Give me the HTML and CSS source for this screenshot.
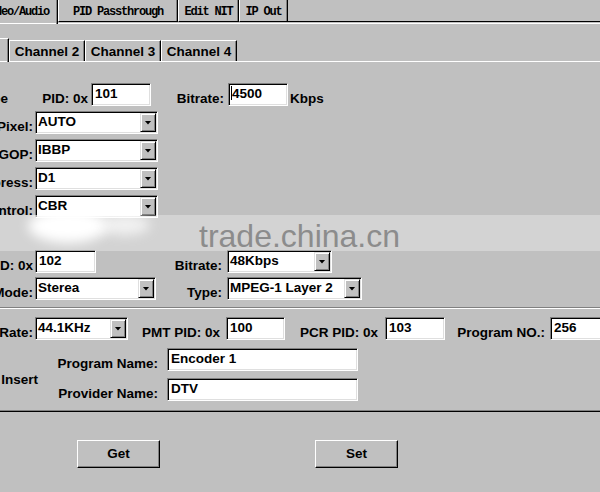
FILE: index.html
```html
<!DOCTYPE html>
<html lang="en">
<head>
    <meta charset="UTF-8">
    <meta name="viewport" content="width=device-width, initial-scale=1.0">
    <title>Encoder Setup</title>
    <link rel="stylesheet" href="styles.css">
</head>
<body>
    <div class="window">
        <!-- page tabs -->
        <div class="tabs">
            <div class="tab active tab-video">Video/Audio</div>
            <div class="tab tab-pid">PID Passthrough</div>
            <div class="tab tab-nit">Edit NIT</div>
            <div class="tab tab-ip">IP Out</div>
            <div class="tab-rest"></div>
        </div>

        <!-- channel tabs -->
        <div class="channels">
            <div class="chan active">Channel 1</div>
            <div class="chan">Channel 2</div>
            <div class="chan">Channel 3</div>
            <div class="chan">Channel 4</div>
        </div>

        <!-- video settings -->
        <div class="group video">
            <div class="row">
                <div class="lbl cap-video">Video Type</div>
                <div class="lbl lbl-pid">PID: 0x</div>
                <div class="field f-pid">101</div>
                <div class="lbl lbl-rate">Bitrate:</div>
                <div class="field f-rate"><span class="caret"></span>4500</div>
                <div class="lbl unit">Kbps</div>
            </div>
            <div class="row">
                <div class="lbl lead">Pixel:</div>
                <div class="field combo c-video"><span>AUTO</span><span class="drop"></span></div>
            </div>
            <div class="row">
                <div class="lbl lead">GOP:</div>
                <div class="field combo c-video"><span>IBBP</span><span class="drop"></span></div>
            </div>
            <div class="row">
                <div class="lbl lead">Compress:</div>
                <div class="field combo c-video"><span>D1</span><span class="drop"></span></div>
            </div>
            <div class="row">
                <div class="lbl lead">Rate Control:</div>
                <div class="field combo c-video"><span>CBR</span><span class="drop"></span></div>
            </div>
        </div>

        <!-- audio settings -->
        <div class="group audio">
            <div class="row">
                <div class="lbl lead">Audio PID: 0x</div>
                <div class="field f-apid">102</div>
                <div class="lbl lbl-abitrate">Bitrate:</div>
                <div class="field combo c-abitrate"><span>48Kbps</span><span class="drop"></span></div>
            </div>
            <div class="row">
                <div class="lbl lead">Audio Mode:</div>
                <div class="field combo c-mode"><span>Sterea</span><span class="drop"></span></div>
                <div class="lbl lbl-type">Type:</div>
                <div class="field combo c-type"><span>MPEG-1 Layer 2</span><span class="drop"></span></div>
            </div>
        </div>

        <div class="sep"></div>

        <!-- program / PSI -->
        <div class="group psi">
            <div class="row">
                <div class="lbl lead">Sample Rate:</div>
                <div class="field combo c-sample"><span>44.1KHz</span><span class="drop"></span></div>
                <div class="lbl lbl-pmt">PMT PID: 0x</div>
                <div class="field f-pmt">100</div>
                <div class="lbl lbl-pcr">PCR PID: 0x</div>
                <div class="field f-pcr">103</div>
                <div class="lbl lbl-prog">Program NO.:</div>
                <div class="field f-prog">256</div>
            </div>
            <div class="names">
                <div class="lbl cap-insert">PSI Insert</div>
                <div class="name-rows">
                    <div class="row">
                        <div class="lbl lbl-name">Program Name:</div>
                        <div class="field f-name">Encoder 1</div>
                    </div>
                    <div class="row">
                        <div class="lbl lbl-name">Provider Name:</div>
                        <div class="field f-name">DTV</div>
                    </div>
                </div>
            </div>
        </div>

        <div class="sep dark"></div>

        <div class="actions">
            <div class="button">Get</div>
            <div class="button">Set</div>
        </div>
    </div>

    <div class="watermark">
        <span class="blob blob-a"></span>
        <span class="blob blob-b"></span>
        <span class="mark">trade.china.cn</span>
    </div>
</body>
</html>
```

FILE: styles.css
```css
html,
body {
    margin: 0;
    padding: 0;
    width: 600px;
    height: 492px;
    overflow: hidden;
}

body {
    position: relative;
    background-color: #c0c0c0;
    color: #000000;
    font-family: "Liberation Sans", Arial, sans-serif;
    font-size: 13.5px;
    font-weight: bold;
}

.window {
    margin-left: -60px;
    width: 720px;
}

/* page tabs */
.tabs {
    display: flex;
    align-items: flex-end;
    margin-top: -3px;
    padding-left: 34px;
    padding-bottom: 1px;
    border-bottom: 1px solid #ffffff;
}

.tab {
    box-sizing: border-box;
    font-family: "Liberation Mono", "Courier New", monospace;
    font-size: 12px;
    font-weight: bold;
    letter-spacing: -1.2px;
    line-height: 16px;
    text-align: center;
    padding: 6px 0 1px;
    border-top: 1px solid #ffffff;
    border-left: 1px solid #ffffff;
    border-right: 1px solid #000000;
    border-bottom: 1px solid #000000;
    box-shadow: inset -1px 0 #808080;
}

.tab.active {
    border-bottom: none;
    padding-bottom: 4px;
    margin-bottom: -2px;
}

.tab-video { width: 84px; }
.tab-pid { width: 120px; }
.tab-nit { width: 61px; }
.tab-ip { width: 49px; }

.tab-rest {
    flex: 1;
    border-bottom: 1px solid #000000;
}

/* channel tabs */
.channels {
    display: flex;
    align-items: flex-end;
    margin: 14px 0 0 -15px;
    border-bottom: 1px solid #ffffff;
}

.chan {
    box-sizing: border-box;
    width: 76px;
    line-height: 16px;
    text-align: center;
    padding: 3px 0 1px;
    border-top: 1px solid #ffffff;
    border-left: 1px solid #ffffff;
    border-right: 1px solid #000000;
    box-shadow: inset -1px 0 #808080;
}

.chan.active {
    width: 84px;
    padding: 4px 0 3px;
    margin-bottom: -1px;
}

/* rows */
.group {
    display: flex;
    flex-direction: column;
}

.video {
    margin-top: 21px;
    gap: 5px;
}

.audio {
    margin-top: 32px;
    gap: 4px;
}

.psi {
    margin-top: 8px;
    gap: 8px;
}

.row {
    display: flex;
    align-items: flex-start;
    height: 23px;
}

/* right-aligned label; long text spills out to the left */
.lbl {
    flex: none;
    box-sizing: border-box;
    display: flex;
    justify-content: flex-end;
    white-space: nowrap;
    line-height: 16px;
    padding-top: 8px;
}

.lead { width: 93px; margin-right: 2px; }
.cap-video { width: 68px; }
.lbl-pid { width: 80px; margin-right: 3px; }
.lbl-rate { width: 73px; margin-right: 4px; }
.unit { margin-left: 2px; }
.lbl-abitrate { width: 126px; margin-right: 5px; }
.lbl-type { width: 66px; margin-right: 5px; }
.lbl-pmt { width: 92px; margin-right: 6px; }
.lbl-pcr { width: 93px; margin-right: 7px; }
.lbl-prog { width: 100px; margin-right: 5px; }
.lbl-name { width: 120px; margin-right: 9px; }

/* sunken edit box */
.field {
    flex: none;
    box-sizing: border-box;
    height: 23px;
    background-color: #ffffff;
    border: 1px solid;
    border-color: #808080 #ffffff #ffffff #808080;
    box-shadow: inset 1px 1px #000000, inset -1px -1px #dfdfdf;
    padding: 2px 2px 0 3px;
    line-height: 16px;
    white-space: nowrap;
    overflow: hidden;
}

.f-pid { width: 60px; }
.f-rate { width: 60px; }
.f-apid { width: 61px; }
.f-pmt { width: 59px; }
.f-pcr { width: 60px; }
.f-prog { width: 70px; }
.f-name { width: 191px; }

.caret {
    display: inline-block;
    width: 1px;
    height: 14px;
    background-color: #000000;
    vertical-align: -2px;
    margin-left: -1px;
}

/* combo box */
.combo {
    display: flex;
    justify-content: space-between;
    padding: 1px 1px 1px 2px;
}

.combo span:first-child {
    padding-top: 1px;
}

.c-video { width: 123px; }
.c-abitrate { width: 105px; }
.c-mode { width: 121px; }
.c-type { width: 135px; }
.c-sample { width: 93px; }

.drop {
    flex: none;
    box-sizing: border-box;
    width: 16px;
    height: 19px;
    background-color: #c0c0c0;
    border: 1px solid;
    border-color: #dfdfdf #000000 #000000 #dfdfdf;
    box-shadow: inset 1px 1px #ffffff, inset -1px -1px #808080;
    display: flex;
    align-items: center;
    justify-content: center;
}

.drop::after {
    content: "";
    width: 7px;
    height: 4px;
    background-color: #000000;
    clip-path: polygon(0 0, 100% 0, 50% 100%);
}

/* name block */
.names {
    display: flex;
}

.cap-insert {
    width: 98px;
    padding-top: 24px;
}

.name-rows {
    display: flex;
    flex-direction: column;
    gap: 7px;
}

/* separators */
.sep {
    margin-top: 7px;
    border-top: 1px solid #808080;
    border-bottom: 1px solid #ffffff;
}

.sep.dark {
    margin-top: 9px;
    border-bottom-color: #000000;
}

/* buttons */
.actions {
    display: flex;
    gap: 155px;
    margin: 28px 0 0 137px;
}

.button {
    box-sizing: border-box;
    width: 83px;
    height: 28px;
    border: 1px solid;
    border-color: #ffffff #000000 #000000 #ffffff;
    box-shadow: inset -1px -1px #808080;
    text-align: center;
    line-height: 25px;
}

/* site stamp over the capture */
.watermark {
    position: absolute;
    left: 0;
    top: 215px;
    width: 600px;
    height: 36px;
    background-color: rgba(255, 255, 255, 0.3);
    overflow: hidden;
}

.blob {
    position: absolute;
    background-color: #ffffff;
    border-radius: 50%;
    filter: blur(6px);
}

.blob-a {
    left: 28px;
    top: -6px;
    width: 80px;
    height: 34px;
}

.blob-b {
    left: 100px;
    top: 0;
    width: 50px;
    height: 20px;
    opacity: 0.7;
}

.mark {
    position: absolute;
    left: 199px;
    top: 3px;
    font-family: "Liberation Sans", Arial, sans-serif;
    font-size: 32px;
    font-weight: normal;
    line-height: 36px;
    color: #8c8c8c;
}
```
